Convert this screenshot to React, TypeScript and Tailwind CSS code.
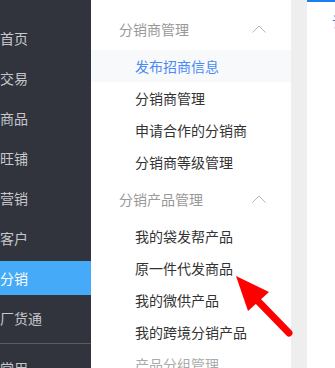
import React from "react";

const side = ["首页", "交易", "商品", "旺铺", "营销", "客户", "分销", "厂货通"];

function Chevron() {
  return (
    <svg width="14" height="8" viewBox="0 0 14 8" className="mr-[25px]">
      <polyline points="0.5,7.5 7,1 13.5,7.5" fill="none" stroke="#b5b5b5" strokeWidth="1" />
    </svg>
  );
}

export default function App() {
  const font = { fontFamily: '"Microsoft YaHei", "Noto Sans CJK SC", "Noto Sans", sans-serif' };
  const item = "h-[32px] shrink-0 flex items-center pl-[44px]";
  const head = "h-[42px] shrink-0 flex items-center justify-between pl-[28px] text-[#999999]";
  return (
    <div className="relative w-[335px] h-[368px] overflow-hidden flex bg-white text-[14px]" style={font}>
      <div className="w-[91px] h-full bg-[#31343c] flex flex-col pt-[21px] shrink-0 overflow-hidden">
        {side.map((s, i) => (
          <div
            key={s}
            className={
              "h-[34px] shrink-0 mb-[6px] flex items-center leading-none " +
              (i === 6 ? "bg-[#45aaf8] text-white" : "text-[#c5c7cc]")
            }
          >
            {s}
          </div>
        ))}
        <div className="mt-[2px] h-px shrink-0 bg-[#5a5c62]" />
        <div className="h-[34px] shrink-0 mt-[7px] flex items-center text-[#c5c7cc] leading-none">常用</div>
      </div>
      <div className="w-[200px] h-full bg-white flex flex-col pt-[8px] shrink-0 overflow-hidden">
        <div className={head}>
          <span>分销商管理</span>
          <Chevron />
        </div>
        <div className={item + " bg-[#f8f9fb] text-[#4a8af4]"}>发布招商信息</div>
        <div className={item + " text-[#333333]"}>分销商管理</div>
        <div className={item + " text-[#333333]"}>申请合作的分销商</div>
        <div className={item + " text-[#333333]"}>分销商等级管理</div>
        <div className={head}>
          <span>分销产品管理</span>
          <Chevron />
        </div>
        <div className={item + " text-[#333333]"}>我的袋发帮产品</div>
        <div className={item + " text-[#333333]"}>原一件代发商品</div>
        <div className={item + " text-[#333333]"}>我的微供产品</div>
        <div className={item + " text-[#333333]"}>我的跨境分销产品</div>
        <div className={item + " text-[#aaaaaa]"}>产品分组管理</div>
      </div>
      <div className="w-[16px] h-full bg-[#eeeeee] shrink-0" />
      <div className="flex-1 h-full bg-white flex flex-col overflow-hidden">
        <div className="h-[2px] shrink-0 bg-[#1a7ef5]" />
        <div className="pl-[25px] pt-[9px] text-[#1a7ef5] whitespace-nowrap">订单</div>
      </div>
      <svg className="absolute left-0 top-0 pointer-events-none" width="335" height="368">
        <polygon points="236,276 269,292 248,311" fill="#ff0000" />
        <line x1="256" y1="299" x2="289" y2="333" stroke="#ff0000" strokeWidth="7" strokeLinecap="round" />
      </svg>
    </div>
  );
}
